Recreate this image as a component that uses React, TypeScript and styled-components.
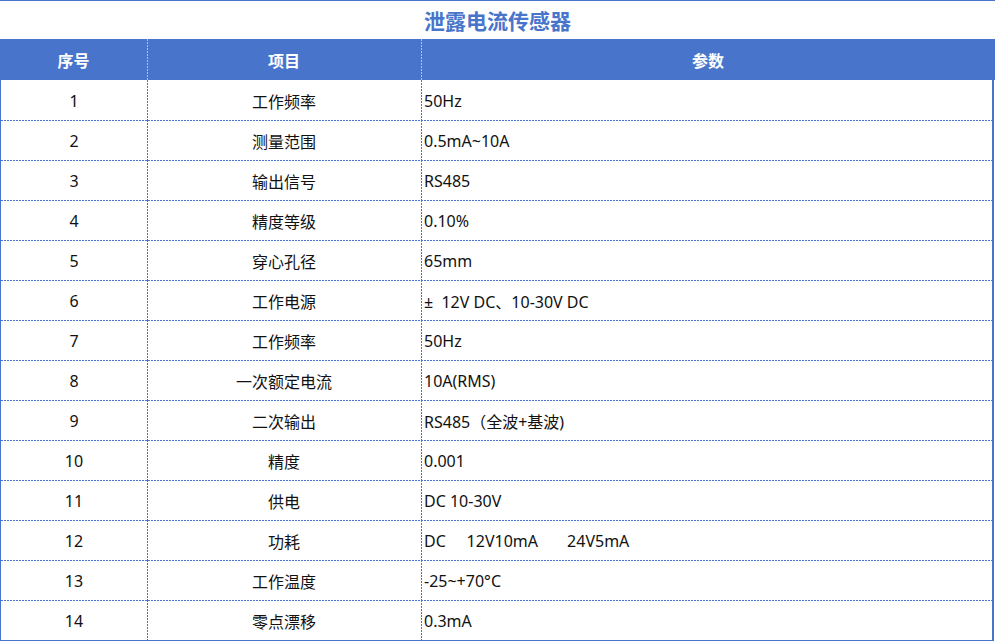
import styled, { createGlobalStyle } from 'styled-components';

const BLUE = '#4874cb';
const NB = '\u00a0';

const rows: [string, string][] = [
    ['工作频率', '50Hz'],
    ['测量范围', '0.5mA~10A'],
    ['输出信号', 'RS485'],
    ['精度等级', '0.10%'],
    ['穿心孔径', '65mm'],
    ['工作电源', `±${NB.repeat(2)}12V DC、10-30V DC`],
    ['工作频率', '50Hz'],
    ['一次额定电流', '10A(RMS)'],
    ['二次输出', 'RS485（全波+基波)'],
    ['精度', '0.001'],
    ['供电', 'DC 10-30V'],
    ['功耗', `DC${NB.repeat(5)}12V10mA${NB.repeat(7)}24V5mA`],
    ['工作温度', '-25~+70°C'],
    ['零点漂移', '0.3mA'],
];

const GlobalStyle = createGlobalStyle`
    body {
        margin: 0;
        background: #fff;
        font-family: 'Noto Sans', 'Noto Sans CJK SC', sans-serif;
    }
`;

const Page = styled.div`
    width: 995px;
    height: 641px;
    overflow: hidden;
    border-top: 1px solid ${BLUE};
    box-sizing: border-box;
`;

const Title = styled.div`
    height: 38px;
    display: flex;
    align-items: center;
    justify-content: center;
    color: ${BLUE};
    font-size: 21px;
    font-weight: bold;
`;

const Grid = styled.div`
    display: grid;
    grid-template-columns: 147px 274px 1fr;
`;

const Head = styled(Grid)`
    height: 41px;
    background: ${BLUE};
    color: #fff;
    font-size: 16px;
    font-weight: bold;
`;

const Body = styled.div`
    width: 994px;
    box-sizing: border-box;
    border-left: 1px solid ${BLUE};
    border-right: 2px solid ${BLUE};
    border-bottom: 2px solid ${BLUE};
`;

const Row = styled(Grid)<{ $first?: boolean }>`
    grid-template-columns: 146px 274px 1fr;
    height: 40px;
    font-size: 16px;
    color: #111;
    background-image: ${(p) =>
        p.$first ? 'none' : `repeating-linear-gradient(to right, ${BLUE} 0 2px, transparent 2px 3px)`};
    background-size: 100% 1px;
    background-repeat: no-repeat;
    background-position: top left;
`;

const Cell = styled.div<{ $left?: boolean; $divider?: string }>`
    display: flex;
    align-items: center;
    justify-content: ${(p) => (p.$left ? 'flex-start' : 'center')};
    padding-left: ${(p) => (p.$left ? '3px' : '0')};
    padding-top: 1px;
    white-space: pre;
    background-image: ${(p) =>
        p.$divider ? `repeating-linear-gradient(to bottom, ${p.$divider} 0 2px, transparent 2px 3px)` : 'none'};
    background-size: 1px 100%;
    background-repeat: no-repeat;
    background-position: top left;
`;

export default function App() {
    return (
        <Page>
            <GlobalStyle />
            <Title>泄露电流传感器</Title>
            <Head>
                <Cell>序号</Cell>
                <Cell $divider="rgba(255,255,255,0.55)">项目</Cell>
                <Cell $divider="rgba(255,255,255,0.55)">参数</Cell>
            </Head>
            <Body>
                {rows.map(([item, value], i) => (
                    <Row key={i} $first={i === 0}>
                        <Cell>{i + 1}</Cell>
                        <Cell $divider={BLUE}>{item}</Cell>
                        <Cell $divider={BLUE} $left>
                            {value}
                        </Cell>
                    </Row>
                ))}
            </Body>
        </Page>
    );
}
